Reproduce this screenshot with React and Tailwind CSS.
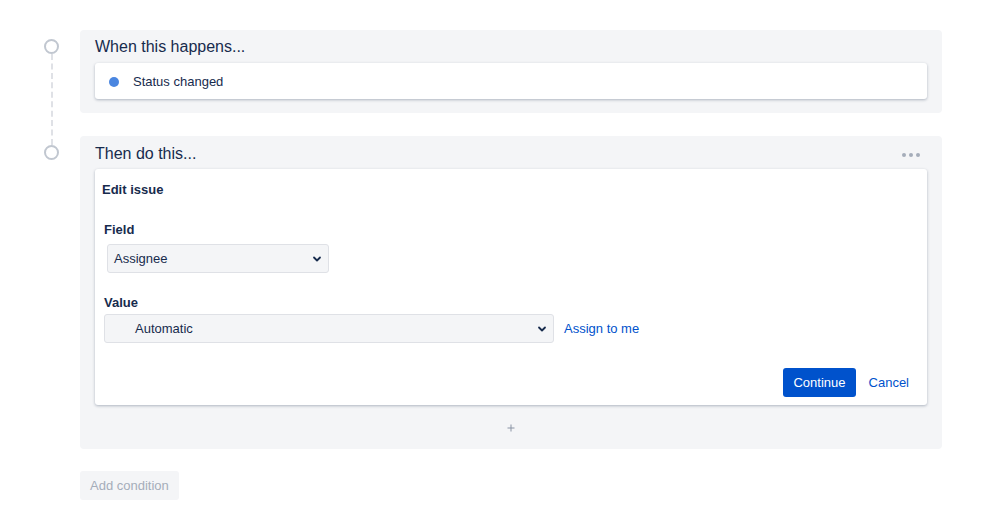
import React from 'react';

const font = { fontFamily: '"Liberation Sans", Arial, sans-serif' };

const Chevron = () => (
  <svg width="10" height="10" viewBox="0 0 10 10" className="text-[#172b4d]">
    <path d="M2 3.5 L5 6.5 L8 3.5" fill="none" stroke="currentColor" strokeWidth="1.8" strokeLinecap="round" strokeLinejoin="round" />
  </svg>
);

const Step = () => (
  <div className="w-[15px] h-[15px] rounded-full border-2 border-[#c1c7d0] bg-white shrink-0" />
);

export default function App() {
  return (
    <div className="w-[999px] h-[519px] bg-white text-[#172b4d] relative" style={font}>
      <div className="flex pt-[30px]">
        {/* timeline */}
        <div className="w-[80px] flex flex-col items-start pl-[44px] pt-[9px]">
          <div className="w-[15px] flex flex-col items-center">
            <Step />
            <div className="h-[91px] border-l-2 border-dashed border-[#dfe1e6]" />
            <Step />
          </div>
        </div>

        <div className="w-[862px] flex flex-col">
          {/* trigger */}
          <div className="bg-[#f4f5f7] rounded-[4px] px-[15px] pt-[8px] pb-[14px]">
            <div className="text-[16px] leading-[18px] mb-[7px]">When this happens...</div>
            <div className="bg-white rounded-[3px] shadow-[0_1px_3px_rgba(9,30,66,0.3)] h-[36px] flex items-center pl-[14px] pt-[1px]">
              <span className="w-[10px] h-[10px] rounded-full bg-[#4a86e0] mr-[14px]" />
              <span className="text-[13px]">Status changed</span>
            </div>
          </div>

          {/* action */}
          <div className="bg-[#f4f5f7] rounded-[4px] px-[15px] pt-[9px] pb-[7px] mt-[23px]">
            <div className="flex items-center justify-between">
              <div className="text-[16px] leading-[18px]">Then do this...</div>
              <div className="flex gap-[3px] mr-[7px] mt-[2px]">
                <span className="w-[4px] h-[4px] rounded-full bg-[#a5adba]" />
                <span className="w-[4px] h-[4px] rounded-full bg-[#a5adba]" />
                <span className="w-[4px] h-[4px] rounded-full bg-[#a5adba]" />
              </div>
            </div>
            <div className="bg-white rounded-[3px] shadow-[0_1px_3px_rgba(9,30,66,0.3)] mt-[6px] h-[236px] px-[7px] pt-[12px] flex flex-col">
              <div className="text-[13px] font-bold leading-[17px]">Edit issue</div>
              <div className="text-[13px] font-bold leading-[17px] mt-[23px] ml-[2px]">Field</div>
              <div className="mt-[6px] ml-[5px] w-[222px] h-[29px] bg-[#f4f5f7] border border-[#dfe1e6] rounded-[3px] flex items-center justify-between pl-[6px] pr-[6px] text-[13px]">
                <span>Assignee</span>
                <Chevron />
              </div>
              <div className="text-[13px] font-bold leading-[17px] mt-[21px] ml-[2px]">Value</div>
              <div className="flex items-center mt-[3px] ml-[2px]">
                <div className="w-[450px] h-[29px] bg-[#f4f5f7] border border-[#dfe1e6] rounded-[3px] flex items-center justify-between pl-[30px] pr-[6px] text-[13px]">
                  <span>Automatic</span>
                  <Chevron />
                </div>
                <span className="ml-[10px] text-[13px] text-[#0052cc]">Assign to me</span>
              </div>
              <div className="flex items-center justify-end mt-[25px] mr-[11px]">
                <button className="h-[29px] px-[10px] bg-[#0052cc] text-white text-[13px] rounded-[3px]">Continue</button>
                <span className="ml-[13px] text-[13px] text-[#0052cc]">Cancel</span>
              </div>
            </div>
            <div className="flex justify-center mt-[19px] mb-[10px]">
              <svg width="8" height="8" viewBox="0 0 8 8">
                <path d="M4 0.5 V7.5 M0.5 4 H7.5" stroke="#8993a4" strokeWidth="1" />
              </svg>
            </div>
          </div>

          <div className="mt-[22px]">
            <button className="h-[29px] px-[10px] bg-[#f4f5f7] text-[#a5adba] text-[13px] rounded-[3px]">Add condition</button>
          </div>
        </div>
      </div>
    </div>
  );
}
